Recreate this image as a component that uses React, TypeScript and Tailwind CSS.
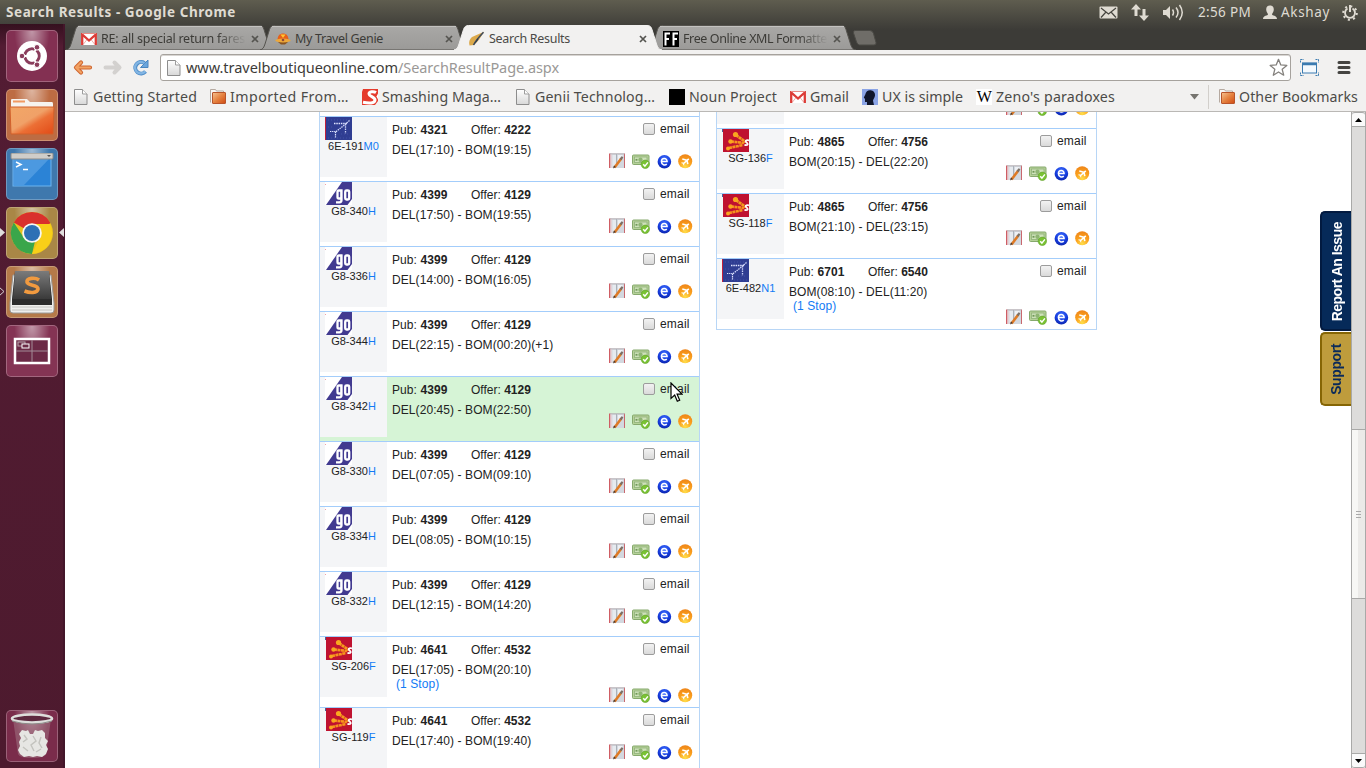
import { useLayoutEffect, useRef, useState, type ReactNode } from "react";

/* Text that is spaced so that it fills exactly `w` pixels. */
function Fit({ w, children, className = "" }: { w: number; children: string; className?: string }) {
  const ref = useRef<HTMLSpanElement>(null);
  const [gap, setGap] = useState(0);
  useLayoutEffect(() => {
    const el = ref.current;
    if (el) setGap((w - el.getBoundingClientRect().width) / children.length);
  }, [w, children]);
  return (
    <span ref={ref} className={`inline-block shrink-0 whitespace-nowrap ${className}`} style={{ letterSpacing: gap }}>
      {children}
    </span>
  );
}

/* ---------- small pictures ---------- */

const PageIcon = () => (
  <svg width="16" height="16" viewBox="0 0 16 16" className="shrink-0">
    <defs>
      <linearGradient id="pg" x1="0" y1="0" x2="0" y2="1"><stop offset="0" stopColor="#fff" /><stop offset="1" stopColor="#d8d8d8" /></linearGradient>
    </defs>
    <path d="M1.500.5h8l4.500 4.500v10.500h-12.500z" fill="url(#pg)" stroke="#8d8d8d" />
    <path d="M9.500.5v4.500h4.500" fill="#fff" stroke="#9d9d9d" />
  </svg>
);

const FolderIcon = () => (
  <svg width="16" height="16" viewBox="0 0 16 16" className="shrink-0">
    <defs>
      <linearGradient id="fo" x1="0" y1="0" x2="1" y2="1"><stop offset="0" stopColor="#f6c493" /><stop offset=".5" stopColor="#e58240" /><stop offset="1" stopColor="#d04a12" /></linearGradient>
    </defs>
    <path d="M.5 13.500V.5h5l1 1.500h7v3" fill="#f8f6f4" stroke="#b5a9a0" />
    <rect x="2.500" y="3.500" width="13" height="11" rx=".5" fill="url(#fo)" stroke="#b8542a" />
  </svg>
);

const GmailIcon = () => (
  <svg width="16" height="12" viewBox="0 0 16 12" className="shrink-0">
    <rect width="16" height="12" rx="1" fill="#fff" />
    <path d="M2.500 11 6 6.500M13.500 11 10 6.500" stroke="#f0b0ab" fill="none" />
    <path d="M1.200 12V1.500L8 7.500l6.800-6V12" fill="none" stroke="#dc3c37" strokeWidth="2.300" />
    <path d="M1 .5h14" stroke="#e88c86" />
  </svg>
);

const GenieIcon = () => (
  <svg width="16" height="12" viewBox="0 0 16 12" className="shrink-0">
    <path d="M3 9h10l-3 2.500H6z" fill="#8a5420" />
    <path d="M2.500 7C2.500 2.500 5 .5 8 .5s5.500 2 5.500 6.500z" fill="#e6601a" />
    <path d="M5.500 1.500h5L8 5z" fill="#ffc531" />
    <ellipse cx="8" cy="7.500" rx="7.700" ry="1.900" fill="#eda83a" />
    <circle cx="8" cy="7" r="1.300" fill="#8d4a3a" />
  </svg>
);

const QuillIcon = () => (
  <svg width="17" height="16" viewBox="0 0 17 16" className="shrink-0">
    <path d="M16 .8 4 6C1.500 8 .5 11 1.500 14.500L6 14c4-3 7-8 10-13.200z" fill="#dca94a" />
    <path d="M15.500 1.300C11 6 8 9 5.500 14" stroke="#3d4a5e" strokeWidth="1.500" fill="none" />
    <path d="M5.500 14.500 9.500 7.500l1 1z" fill="#2b3a52" />
  </svg>
);

const FFIcon = () => (
  <svg width="16" height="16" viewBox="0 0 16 16" className="shrink-0">
    <rect width="16" height="16" fill="#000" />
    <path d="M2.500 14.500V2.500H7M2.500 8H6M10.500 14.500V2.500H15M10.500 8H14" stroke="#fff" strokeWidth="2" fill="none" />
  </svg>
);

const SmashIcon = () => (
  <svg width="17" height="16" viewBox="0 0 17 16" className="shrink-0">
    <path d="M1 0h15v12l-3 4H0V3z" fill="#e53b2c" />
    <path d="M16 4.500l-1.500 3 1.500 3z" fill="#fff" />
    <path d="M14 3.500C11.500 2 7 2.500 7 5s6.500 3 6 6.200-6 3.300-12 2" fill="none" stroke="#fff" strokeWidth="3" />
  </svg>
);

const HeadIcon = () => (
  <svg width="16" height="16" viewBox="0 0 16 16" className="shrink-0">
    <rect width="16" height="16" fill="#8ba4e6" />
    <path d="M5 16v-3H3V10L1.800 8.500 3.300 5.500C3.800 2.500 6 1 8.500 1.200c3 .3 4.800 2.500 4.500 5.300-.3 2.300-1.500 3-2 5.200l1 4.300z" fill="#10162c" />
  </svg>
);

const BookIcon = () => (
  <svg width="16" height="16" viewBox="0 0 16 16">
    <rect x="0" y="1" width="16" height="14" fill="#d3d8df" />
    <path d="M.7.500v14.500" stroke="#cf5d64" strokeWidth="1.400" />
    <path d="M2 .5v14.500" stroke="#f3cdd0" />
    <path d="M15.500.5v14.500" stroke="#c9686e" strokeWidth="1" />
    <path d="M1 .8h14.500" stroke="#b3adb3" />
    <path d="M3.500 2h3.500v11.500H3.500z" fill="#e6eaef" />
    <path d="M7.500 1v9" stroke="#aab1b9" />
    <path d="M9 2h5L9 8z" fill="#eef1f5" />
    <path d="M5.500 14.500 12.300 5.500" stroke="#de7a25" strokeWidth="2.600" />
    <path d="M11.500 6.500 13.500 3.800" stroke="#7b7067" strokeWidth="2.200" />
    <path d="M4 15.500l1-3 1.800 1.500z" fill="#4a3a30" />
  </svg>
);

const CashIcon = () => (
  <svg width="18" height="15" viewBox="0 0 18 15">
    <rect x=".5" y="1" width="16.500" height="9.500" rx="1" fill="#b5d198" stroke="#86a96d" />
    <rect x="2.500" y="3" width="12.500" height="5.500" fill="#cfe2bb" stroke="#8fb179" strokeWidth=".8" />
    <circle cx="8.500" cy="5.700" r="2.200" fill="#8fb573" />
    <path d="M3.500 5.800h2" stroke="#6f9856" strokeWidth="1.800" />
    <circle cx="13.300" cy="10.300" r="4.200" fill="#79c233" stroke="#62a02c" strokeWidth=".6" />
    <path d="M11.200 10.200l1.700 1.900 3-3.700" stroke="#fff" strokeWidth="1.500" fill="none" />
  </svg>
);

const EIcon = () => (
  <svg width="15" height="15" viewBox="0 0 15 15">
    <defs>
      <radialGradient id="eb" cx=".5" cy=".3" r=".8"><stop offset="0" stopColor="#3f70ff" /><stop offset=".55" stopColor="#153bdc" /><stop offset="1" stopColor="#0a1f9c" /></radialGradient>
    </defs>
    <circle cx="7.400" cy="7.700" r="6.800" fill="url(#eb)" />
    <path d="M4.900 7.600h5.200C10.100 3.400 4.400 3.600 4.400 7.600c0 3.600 3.700 4 5.400 2.500" fill="none" stroke="#fff" strokeWidth="1.500" />
  </svg>
);

const PlaneIcon = () => (
  <svg width="15" height="15" viewBox="0 0 15 15">
    <defs>
      <radialGradient id="or" cx=".5" cy=".9" r=".9"><stop offset="0" stopColor="#ffdf4a" /><stop offset=".5" stopColor="#fba21e" /><stop offset="1" stopColor="#ee8418" /></radialGradient>
    </defs>
    <circle cx="7.200" cy="7.300" r="7" fill="url(#or)" />
    <path d="M10.800 4.800 5 10M4.300 5l4.700 1.300.8 3.900" stroke="#fff" strokeWidth="1.600" fill="none" />
    <path d="M3.500 8.800l2 .3.300 2.200" stroke="#fff" strokeWidth="1" fill="none" />
  </svg>
);

type Airline = "6E" | "G8" | "SG";

const AirlineLogo = ({ code }: { code: Airline }) => {
  if (code === "6E")
    return (
      <svg width="27" height="23" viewBox="0 0 27 23">
        <rect width="27" height="23" fill="#2f3d92" />
        <path d="M.5 0v23" stroke="#c01f3a" />
        <path d="M3 3h22M3 21h22M3 10h6M16 17h9" stroke="#4252a5" strokeDasharray="1 2" />
        <path d="M9 6.500h13" stroke="#dfe4ff" strokeWidth="1.300" strokeDasharray="1.500 .8" />
        <path d="M24.500 3.500 20 7.500 10 15.500M20.500 7v9.500" stroke="#cdd4f7" strokeWidth="1.300" strokeDasharray="1.500 .8" fill="none" />
        <path d="M5 14.500h7M10.500 15v6" stroke="#dfe4ff" strokeWidth="1.200" strokeDasharray="1.300 .8" />
      </svg>
    );
  if (code === "G8")
    return (
      <svg width="27" height="23" viewBox="0 0 27 23">
        <rect width="27" height="23" fill="#fff" />
        <path d="M17 0h10v23H1z" fill="#413a90" />
        <rect width="1" height="1" y="2" fill="#f0a0a8" />
        <path d="M16.300 8.500h-2.500q-1.300 0-1.300 1.500v5q0 1.500 1.300 1.500h2.500zM16.500 7.500V18q0 2.300-2 2.300h-3.500" fill="none" stroke="#fff" strokeWidth="2.300" />
        <rect x="20.200" y="8.500" width="4" height="9" rx="1.300" fill="none" stroke="#fff" strokeWidth="2.300" />
        <path d="M22.500 23 27 17v6z" fill="#fff" />
      </svg>
    );
  return (
    <svg width="27" height="23" viewBox="0 0 27 23">
      <rect x="1" width="26" height="23" fill="#bf1230" />
      <rect width="1" height="3" fill="#49609b" />
      <path d="M14 6 23.500 13" stroke="#f59a1c" strokeWidth="2.800" strokeDasharray="3 .5" />
      <path d="M9 12.500 22 14" stroke="#f7941d" strokeWidth="2.600" strokeDasharray="3 .5" />
      <path d="M7 19 21 16" stroke="#f7941d" strokeWidth="2.600" strokeDasharray="3 .5" />
      <circle cx="13.500" cy="5.500" r="2.600" fill="#f9a71f" /><circle cx="8.500" cy="12.500" r="2.200" fill="#f9a71f" /><circle cx="6" cy="19.500" r="2" fill="#f9a71f" />
      <path d="M27 11.500c-3-1-4.200.8-2.500 2s2 3-2 2.500" fill="none" stroke="#fff" strokeWidth="1.800" />
    </svg>
  );
};

/* ---------- flight list ---------- */

type Flight = {
  air: Airline; no: string; cls: string; pub: string; offer: string; route: string; stop?: boolean; hot?: boolean;
};

const outbound: Flight[] = [
  { air: "6E", no: "6E-191", cls: "M0", pub: "4321", offer: "4222", route: "DEL(17:10) - BOM(19:15)" },
  { air: "G8", no: "G8-340", cls: "H", pub: "4399", offer: "4129", route: "DEL(17:50) - BOM(19:55)" },
  { air: "G8", no: "G8-336", cls: "H", pub: "4399", offer: "4129", route: "DEL(14:00) - BOM(16:05)" },
  { air: "G8", no: "G8-344", cls: "H", pub: "4399", offer: "4129", route: "DEL(22:15) - BOM(00:20)(+1)" },
  { air: "G8", no: "G8-342", cls: "H", pub: "4399", offer: "4129", route: "DEL(20:45) - BOM(22:50)", hot: true },
  { air: "G8", no: "G8-330", cls: "H", pub: "4399", offer: "4129", route: "DEL(07:05) - BOM(09:10)" },
  { air: "G8", no: "G8-334", cls: "H", pub: "4399", offer: "4129", route: "DEL(08:05) - BOM(10:15)" },
  { air: "G8", no: "G8-332", cls: "H", pub: "4399", offer: "4129", route: "DEL(12:15) - BOM(14:20)" },
  { air: "SG", no: "SG-206", cls: "F", pub: "4641", offer: "4532", route: "DEL(17:05) - BOM(20:10)", stop: true },
  { air: "SG", no: "SG-119", cls: "F", pub: "4641", offer: "4532", route: "DEL(17:40) - BOM(19:40)" },
];

const inbound: Flight[] = [
  { air: "SG", no: "SG-136", cls: "F", pub: "4865", offer: "4756", route: "BOM(20:15) - DEL(22:20)" },
  { air: "SG", no: "SG-118", cls: "F", pub: "4865", offer: "4756", route: "BOM(21:10) - DEL(23:15)" },
  { air: "6E", no: "6E-482", cls: "N1", pub: "6701", offer: "6540", route: "BOM(08:10) - DEL(11:20)", stop: true },
];

const Actions = () => (
  <div className="flex h-4 w-[84px] items-center">
    <span className="w-[23px] shrink-0"><BookIcon /></span>
    <span className="w-[25px] shrink-0"><CashIcon /></span>
    <span className="w-[21px] shrink-0"><EIcon /></span>
    <span className="shrink-0"><PlaneIcon /></span>
  </div>
);

function FlightRow({ f }: { f: Flight }) {
  return (
    <div className={`flex shrink-0 border-t border-[#a3cdfb] ${f.stop ? "h-[71px]" : "h-[65px]"} ${f.hot ? "bg-[#d6f4d6]" : "bg-white"}`}>
      <div className="flex h-[60px] w-[67px] flex-col bg-[#f4f5f7]">
        <div className="ml-[5px] h-[23px]"><AirlineLogo code={f.air} /></div>
        <div className="text-center text-[11px] leading-[13px]">
          {f.no}<span className="text-[#127bf5]">{f.cls}</span>
        </div>
      </div>
      <div className="ml-[5px] flex w-[217px] flex-col pt-[6px] text-[12px] leading-[14px] tracking-[0.08px]">
        <div className="flex">
          <span className="w-[79px]">Pub: <b>{f.pub}</b></span>
          <span className="tracking-normal">Offer: <b>{f.offer}</b></span>
        </div>
        <div className="mt-[6px]">{f.route}</div>
        {f.stop && <div className="ml-1 text-[#127bf5]">(1 Stop)</div>}
      </div>
      <div className="flex flex-col">
        <div className="mt-[5px] ml-[34px] flex h-[14px] items-center text-[12px] tracking-[0.2px]">
          <span className="mr-[5px] size-3 rounded-[2px] border border-[#9c9c9c] bg-linear-to-b from-[#f2f2f2] to-[#dadada]" />
          email
        </div>
        <div className={f.stop ? "mt-[31px]" : "mt-[17px]"}><Actions /></div>
      </div>
    </div>
  );
}

/* ---------- browser chrome ---------- */

function Tab({ icon, title, w, active = false, fade = false }: { icon: ReactNode; title: string; w: number; active?: boolean; fade?: boolean }) {
  return (
    <div className={`relative -mr-[14px] flex h-[25px] w-[208px] shrink-0 items-center pt-[2px] pl-[14px] ${active ? "z-10" : ""}`}>
      <svg className="absolute inset-0" width="208" height="25" viewBox="0 0 208 25">
        <defs>
          <linearGradient id="tb" x1="0" y1="0" x2="0" y2="1"><stop offset="0" stopColor="#a9a8a6" /><stop offset="1" stopColor="#9b9a98" /></linearGradient>
        </defs>
        <path d="M0 25C3 24.500 4 22 5 19L9.500 4.500C10.500 1.500 12 .5 14.500.5H193c3 0 4 1 5 4l4.500 14.500c1 3 2 5.500 5.500 6z" fill={active ? "#f2f1f0" : "url(#tb)"} stroke={active ? "#f2f1f0" : "#55534e"} strokeWidth="1" />
        {!active && <path d="M12 1.500h184" stroke="#c3c2c0" />}
      </svg>
      <div className="relative flex w-[166px] items-center gap-1">
        <span className="flex w-[17px] justify-center pt-px">{icon}</span>
        <div className={`flex-1 overflow-hidden text-[12.500px] leading-[19px] ${active ? "text-[#4b4a47]" : "text-[#3c3b37]"} ${fade ? "mask-r-from-80%" : ""}`}>
          <Fit w={w}>{title}</Fit>
        </div>
      </div>
      <svg className="relative mt-px ml-[5px]" width="8" height="8" viewBox="0 0 8 8"><path d="M1 1l6 6M7 1 1 7" stroke="#555450" strokeWidth="1.700" /></svg>
    </div>
  );
}

function Bookmark({ icon, title, w, gap = 14 }: { icon: ReactNode; title: string; w: number; gap?: number }) {
  return (
    <div className="flex items-center" style={{ marginRight: gap }}>
      <span className="flex w-5 shrink-0 items-center">{icon}</span>
      <Fit w={w}>{title}</Fit>
    </div>
  );
}

const Tile = ({ className, children }: { className: string; children: ReactNode }) => (
  <div className={`relative flex size-[52px] shrink-0 items-center justify-center overflow-hidden rounded-[5px] border border-white/25 ${className}`}>
    <div className="absolute inset-0 bg-radial-[at_50%_0%] from-white/50 via-transparent via-50% to-transparent" />
    <div className="relative">{children}</div>
  </div>
);

function Launcher() {
  return (
    <div className="relative flex w-[65px] shrink-0 flex-col items-center gap-[7px] border-r-2 border-[#43162a] bg-linear-to-b from-[#35101f] via-[#531c33] via-3% to-[#4d1a2e] pt-[6px] pb-[6px]">
      <Tile className="bg-[#833052]">
        <svg width="32" height="32" viewBox="0 0 32 32">
          <circle cx="16" cy="16" r="15" fill="#fff" />
          <circle cx="16" cy="16" r="7.200" fill="none" stroke="#8a3d5c" strokeWidth="3" />
          <path d="M16 16H4M16 16l6-10.400M16 16l6 10.400" stroke="#fff" strokeWidth="1.800" />
          <circle cx="16" cy="16" r="5.500" fill="#fff" />
          <g fill="#8a3d5c" stroke="#fff" strokeWidth="1"><circle cx="6" cy="16" r="2.800" /><circle cx="21" cy="7.300" r="2.800" /><circle cx="21" cy="24.700" r="2.800" /></g>
        </svg>
      </Tile>
      <Tile className="bg-[#bd6c43]">
        <svg width="46" height="40" viewBox="0 0 46 40">
          <defs><linearGradient id="bf" x1="0" y1="0" x2="1" y2="1"><stop offset="0" stopColor="#f2a767" /><stop offset=".45" stopColor="#f0a168" /><stop offset=".6" stopColor="#ec6f35" /><stop offset="1" stopColor="#e14a16" /></linearGradient></defs>
          <path d="M2 12V5q0-1 1-1h15l3 3h22q1 0 1 2v4z" fill="#f6f3ef" />
          <path d="M4 6.500h12" stroke="#f09a63" strokeWidth="2" />
          <path d="M1 12h44l-1 27H2z" fill="url(#bf)" stroke="#d2602b" />
        </svg>
      </Tile>
      <Tile className="bg-[#3f78ad]">
        <svg width="44" height="42" viewBox="0 0 44 42">
          <rect x="3" y="4" width="38" height="29" fill="#2b83d6" stroke="#6eb4ef" />
          <path d="M3 5h37L14 32H3z" fill="#5ba3e4" opacity=".7" />
          <rect x="1" y="0" width="42" height="6" rx="1" fill="#cfcdc9" stroke="#8c8b88" />
          <path d="M37 2h4l-2 2z" fill="#555" />
          <path d="M6 9l5 2.500L6 14M13 16.500h5" stroke="#fff" strokeWidth="1.500" fill="none" />
        </svg>
      </Tile>
      <Tile className="bg-[#a98746]">
        <svg width="44" height="44" viewBox="0 0 44 44">
          <circle cx="22" cy="22" r="21" fill="#e8c21c" />
          <path d="M22 22 3.800 11.500A21 21 0 0 1 40.200 11.500L39.500 13H22z" fill="#d9302c" />
          <path d="M22 43A21 21 0 0 1 3.800 11.500L14 27l12-1z" fill="#3aa64a" />
          <path d="M22 43A21 21 0 0 0 40.200 13H22l8 13z" fill="#f8cf18" />
          <circle cx="22" cy="22" r="9.800" fill="#f6f6f4" /><circle cx="22" cy="22" r="8" fill="#2d70b5" />
        </svg>
      </Tile>
      <Tile className="bg-[#b57a49]">
        <svg width="46" height="44" viewBox="0 0 46 44">
          <path d="M4 5h38l3 28v7q0 3-3 3H4q-3 0-3-3v-7z" fill="#efefed" stroke="#999" />
          <path d="M3 37h40M3 40h40" stroke="#c4c4c1" />
          <defs><linearGradient id="su" x1="0" y1="0" x2="0" y2="1"><stop offset="0" stopColor="#7b7b7b" /><stop offset="1" stopColor="#3a3a3a" /></linearGradient></defs>
          <path d="M6 1h34l3 28v6H3v-6z" fill="#2c2c2c" />
          <path d="M6 1h34l2 28H4z" fill="url(#su)" />
          <path d="M30 10c-4-3-12.500-2-12 2s11.500 2.500 11 7-8.500 4-13.500 2" fill="none" stroke="#f19a3f" strokeWidth="3.600" />
        </svg>
      </Tile>
      <Tile className="bg-[#843454]">
        <svg width="38" height="28" viewBox="0 0 38 28">
          <rect x="2" y="2" width="34" height="24" fill="#6b2a46" stroke="#fff" strokeWidth="2.500" />
          <path d="M19 3v22M3 14h32" stroke="#a38b96" />
          <rect x="5" y="5" width="7" height="4" fill="none" stroke="#b9a5ae" /><rect x="9" y="7" width="7" height="4" fill="#6b2a46" stroke="#fff" />
        </svg>
      </Tile>
      <div className="flex-1" />
      <Tile className="bg-[#7a2c4b]">
        <svg width="46" height="48" viewBox="0 0 46 48">
          <path d="M4 7l5 35q1 4 14 4t14-4L42 7z" fill="#a8838f" opacity=".45" />
          <path d="M10 22l3-4 4 1 2-1 2 4 3 0 2-4 3 1 4-1 3 3 0 5 3 3-2 4 2 4-2 5-4 3-5-1-4 1-4-1-5 1-4-3-2-4 2-4-1-4 2-4z" fill="#e6e6e3" />
          <path d="M15 23l3 4-4 3M24 24l3 5-5 4 3 6M32 25l-2 6 3 5M14 35l5 4M27 40l5-3" stroke="#c3c3be" strokeWidth="1.400" fill="none" />
          <ellipse cx="23" cy="6.500" rx="20" ry="4" fill="#5e2940" stroke="#dededc" strokeWidth="2.600" />
          <path d="M3 9q20 6 40 0" stroke="#8c8c89" fill="none" />
        </svg>
      </Tile>
      <svg className="absolute top-0 left-0" width="65" height="300" viewBox="0 0 65 300">
        <path d="M0 204l5 4.500-5 4.500z" fill="#e0dedd" /><path d="M64 204l-5 4.500 5 4.500z" fill="#e0dedd" /><path d="M-1 263l5 4.500-5 4.500" fill="none" stroke="#d8d2d5" />
      </svg>
    </div>
  );
}

function StatusBar() {
  return (
    <div className="flex h-6 shrink-0 items-center pr-2 pl-[6px] text-[13.500px] text-[#dfdbd2]">
      <Fit w={230} className="font-bold">Search Results - Google Chrome</Fit>
      <div className="flex-1" />
      <svg width="19" height="13" viewBox="0 0 19 13"><rect x=".5" y=".5" width="18" height="12" rx="1" fill="#dfdbd2" /><path d="M2 2l7.500 6L17 2M2 11.500 7 6M17 11.500 12 6" stroke="#45443e" strokeWidth="1.200" fill="none" /></svg>
      <svg className="ml-[13px]" width="18" height="17" viewBox="0 0 18 17"><path d="M5 0l5 5.500H6.500V12h-3V5.500H0zM13 17l5-5.500h-3.500V5h-3v6.500H8z" fill="#dfdbd2" /></svg>
      <svg className="ml-[14px]" width="21" height="17" viewBox="0 0 21 17"><path d="M0 6h3l4-4v13l-4-4H0z" fill="#dfdbd2" /><path d="M9.500 5.500q2 3 0 6M13 3.500q4 5 0 10M16.500 1q5.500 7.500 0 15" stroke="#dfdbd2" strokeWidth="1.500" fill="none" /></svg>
      <span className="w-[14px]" />
      <Fit w={53}>2:56 PM</Fit>
      <svg className="ml-[12px]" width="14" height="15" viewBox="0 0 14 15"><path d="M7 .5c2.500 0 3.800 1.500 3.800 4S9.500 8 9 9.200c0 1.500 5 1.200 5 4.800H0c0-3.600 5-3.300 5-4.800C4.500 8 3.200 7 3.200 4.500S4.500.5 7 .5z" fill="#dfdbd2" /></svg>
      <span className="w-[4px]" />
      <Fit w={49}>Akshay</Fit>
      <svg className="ml-[12px]" width="16" height="17" viewBox="0 0 16 17">
        <circle cx="8" cy="9" r="6.800" fill="none" stroke="#dfdbd2" strokeWidth="2" strokeDasharray="2.100 3.240" />
        <path d="M5.500 4.500A5 5 0 1 0 10.500 4.500" stroke="#dfdbd2" strokeWidth="1.900" fill="none" /><path d="M8 1v7" stroke="#dfdbd2" strokeWidth="2" />
      </svg>
    </div>
  );
}

function Toolbar() {
  return (
    <div className="flex h-[34px] items-center pt-px pl-2">
      <svg width="20" height="18" viewBox="0 0 20 18"><path d="M8 3.500 3 8.500l5 5M4 8.500h13" fill="none" stroke="#cf6530" strokeWidth="4.200" strokeLinejoin="round" strokeLinecap="round" /><path d="M8 3.500 3 8.500l5 5M4 8.500h13" fill="none" stroke="#f2a263" strokeWidth="2.200" strokeLinejoin="round" strokeLinecap="round" /></svg>
      <svg className="ml-[10px]" width="20" height="18" viewBox="0 0 20 18"><path d="M11.500 3.500 16.500 8.500l-5 5M15.500 8.500H2.500" fill="none" stroke="#d3d1cf" strokeWidth="4" strokeLinejoin="round" strokeLinecap="round" /></svg>
      <svg className="ml-[9px]" width="18" height="18" viewBox="0 0 18 18"><path d="M12.500 4A5.800 5.800 0 1 0 13.500 12.500" fill="none" stroke="#4f8dc8" strokeWidth="4" /><path d="M16 1v7.500H8.500z" fill="#6aa5dc" stroke="#4a86c0" /><path d="M12.500 4.200A5.800 5.800 0 1 0 13.300 12.300" fill="none" stroke="#82b5e3" strokeWidth="2.200" /></svg>
      <div className="ml-[10px] flex h-[27px] w-[1131px] items-center rounded-[3px] border border-[#a6a29d] bg-white pl-[5px] shadow-[inset_0_1px_0_#d8d5d2]">
        <PageIcon />
        <span className="w-1" />
        <Fit w={212} className="text-[14.500px] text-[#3d3c39]">www.travelboutiqueonline.com</Fit>
        <Fit w={161} className="text-[14.500px] text-[#9a9896]">/SearchResultPage.aspx</Fit>
        <div className="flex-1" />
        <svg className="mr-[2px]" width="19" height="19" viewBox="0 0 19 19"><path d="M9.500 1.300l2.300 5.600 6 .5-4.600 3.900 1.500 5.900-5.200-3.200-5.200 3.200 1.500-5.900L1.200 7.400l6-.5z" fill="#fff" stroke="#84817d" strokeWidth="1.300" strokeLinejoin="round" /></svg>
      </div>
      <svg className="ml-[9px]" width="19" height="17" viewBox="0 0 19 17"><rect x="2.500" y="4" width="14" height="10" fill="#f4f9fd" stroke="#3b7bb0" /><path d="M2 5h15" stroke="#3b7bb0" strokeWidth="2.500" /><path d="M.5 3.500v-3h3M15.500.5h3v3M.5 13.500v3h3M15.500 16.500h3v-3" stroke="#3b7bb0" fill="none" strokeDasharray="2 .5" /></svg>
      <svg className="ml-[18px]" width="14" height="15" viewBox="0 0 14 15"><path d="M2 2.500h10M2 7.500h10M2 12.500h10" stroke="#454441" strokeWidth="3" strokeLinecap="round" /></svg>
    </div>
  );
}

function Bookmarks() {
  return (
    <div className="flex h-[27px] items-center pb-px pl-2 text-[14.200px] text-[#4c4b48]">
      <Bookmark icon={<PageIcon />} title="Getting Started" w={104} gap={13} />
      <Bookmark icon={<FolderIcon />} title="Imported From…" w={119} gap={13} />
      <Bookmark icon={<SmashIcon />} title="Smashing Maga…" w={119} gap={14} />
      <Bookmark icon={<PageIcon />} title="Genii Technolog…" w={120} gap={14} />
      <Bookmark icon={<div className="size-4 bg-black" />} title="Noun Project" w={88} gap={13} />
      <Bookmark icon={<GmailIcon />} title="Gmail" w={39} gap={13} />
      <Bookmark icon={<HeadIcon />} title="UX is simple" w={81} gap={13} />
      <Bookmark icon={<span className="flex h-4 w-4 items-center justify-center bg-white font-['Liberation_Serif',serif] text-[16px] tracking-tighter text-black">W</span>} title="Zeno's paradoxes" w={119} gap={75} />
      <svg width="9" height="6" viewBox="0 0 9 6" className="shrink-0"><path d="M0 0h9L4.500 5.500z" fill="#76746f" /></svg>
      <div className="mr-[10px] ml-[9px] h-6 w-px shrink-0 bg-[#d2cfcb]" />
      <Bookmark icon={<FolderIcon />} title="Other Bookmarks" w={119} gap={0} />
    </div>
  );
}

function Scrollbar() {
  return (
    <div className="flex w-[15px] shrink-0 flex-col border-x border-[#a9a9a8] bg-[#dddcdb]">
      <div className="flex h-[15px] items-center justify-center rounded-t-[3px] border-y border-[#a9a9a8] bg-[#fafafa]">
        <svg width="7" height="4"><path d="M0 4h7L3.500 0z" fill="#000" /></svg>
      </div>
      <div className="h-[302px]" />
      <div className="flex h-[170px] flex-col items-center justify-center gap-[2px] border-y border-[#a9a9a8] bg-linear-to-r from-[#f7f7f5] from-50% to-[#ebeae8] to-50%">
        <div className="h-px w-[5px] bg-[#aaa]" /><div className="h-px w-[5px] bg-[#aaa]" /><div className="h-px w-[5px] bg-[#aaa]" />
      </div>
      <div className="flex-1" />
      <div className="flex h-[15px] items-center justify-center rounded-b-[3px] border-y border-[#a9a9a8] bg-[#fafafa]">
        <svg width="7" height="4"><path d="M0 0h7L3.500 4z" fill="#000" /></svg>
      </div>
    </div>
  );
}

export default function App() {
  return (
    <div className="relative flex h-[768px] w-[1366px] flex-col overflow-hidden bg-linear-to-b from-[#5f5d4f] to-[#3c3b37] to-[30px] font-['Noto_Sans',sans-serif]">
      <StatusBar />
      <div className="flex min-h-0 flex-1">
        <Launcher />
        <div className="flex min-w-0 flex-1 flex-col">
          <div className="flex h-[26px] shrink-0 items-end pl-[1px]">
            <Tab icon={<GmailIcon />} title="RE: all special return fares" w={144} fade />
            <Tab icon={<GenieIcon />} title="My Travel Genie" w={88} />
            <Tab icon={<QuillIcon />} title="Search Results" w={81} active />
            <Tab icon={<FFIcon />} title="Free Online XML Formatte" w={144} fade />
            <svg className="mb-[4px] ml-[10px]" width="25" height="16" viewBox="0 0 25 16"><path d="M3 .5h15q2.500 0 3.500 3l2.500 9q.5 2.500-2 2.500H7.500q-2 0-3-3l-3-9Q1 .5 3 .5z" fill="#6f6d68" stroke="#4b4a45" /></svg>
          </div>
          <div className="shrink-0 border-b border-[#bab8b5] bg-[#f2f1f0]">
            <Toolbar />
            <Bookmarks />
          </div>
          <div className="flex min-h-0 flex-1 bg-white">
            <div className="flex min-w-0 flex-1 items-start overflow-hidden pl-[254px] font-['Liberation_Sans',sans-serif] text-[#222]">
              <div className="flex h-full w-[381px] flex-col border-x border-[#b8d6f6]">
                <div className="h-1 shrink-0" />
                {outbound.map((f) => <FlightRow key={f.no} f={f} />)}
              </div>
              <div className="ml-4 flex w-[381px] flex-col border-x border-b border-[#b8d6f6]">
                <div className="flex h-4 justify-between overflow-hidden">
                  <div className="h-3 w-[67px] bg-[#f4f5f7]" />
                  <div className="-mt-3 mr-[6px]"><Actions /></div>
                </div>
                {inbound.map((f) => <FlightRow key={f.no} f={f} />)}
              </div>
              <div className="flex-1" />
              <div className="flex w-[31px] flex-col gap-px pt-[99px] text-center text-[14px] font-bold">
                <div className="flex h-[120px] items-center justify-center rounded-l-[5px] border-2 border-r-0 border-[#021a40] bg-[#062a59] pt-px pl-px text-white">
                  <span className="rotate-180 tracking-[-0.5px] [writing-mode:vertical-rl]">Report An Issue</span>
                </div>
                <div className="flex h-[74px] items-center justify-center rounded-l-[5px] border-2 border-r-0 border-[#856504] bg-[#be9c3c] text-[#0a2a5a]">
                  <span className="rotate-180 tracking-[-0.4px] [writing-mode:vertical-rl]">Support</span>
                </div>
              </div>
            </div>
            <Scrollbar />
          </div>
        </div>
      </div>
      <svg className="absolute top-[382px] left-[670px]" width="13" height="21" viewBox="0 0 13 21"><path d="M1 1v15.500l3.700-3.400 2.600 6.200 2.400-1-2.600-6.100H12z" fill="#fff" stroke="#000" strokeWidth="1.200" /></svg>
    </div>
  );
}
